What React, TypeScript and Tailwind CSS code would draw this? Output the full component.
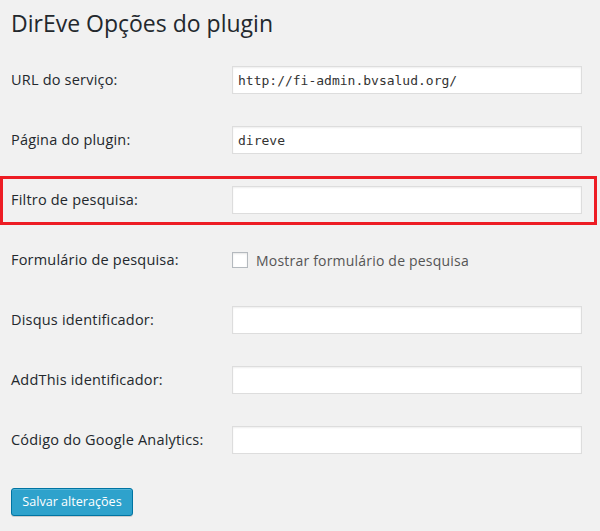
import React from 'react';

const FIELDS = [
    { label: 'URL do serviço:', value: 'http://fi-admin.bvsalud.org/' },
    { label: 'Página do plugin:', value: 'direve' },
    { label: 'Filtro de pesquisa:', value: '', highlight: true },
    { label: 'Formulário de pesquisa:', checkbox: 'Mostrar formulário de pesquisa' },
    { label: 'Disqus identificador:', value: '' },
    { label: 'AddThis identificador:', value: '' },
    { label: 'Código do Google Analytics:', value: '' },
];

function Row({ field }: { field: (typeof FIELDS)[number] }) {
    return (
        <div className="relative flex h-[60px] items-center">
            {field.highlight && (
                <div className="pointer-events-none absolute left-[-11px] right-[-4px] top-[6px] bottom-[5px] border-[3px] border-[#ed1c24]" />
            )}
            <label className="w-[221px] text-[14.5px] font-medium tracking-[0.2px] text-[#23282d]">{field.label}</label>
            {field.checkbox ? (
                <label className="flex items-center gap-[8px] text-[14px] tracking-[0.2px] text-[#555]">
                    <span className="block h-[16px] w-[16px] border border-[#b4b9be] bg-white shadow-[inset_0_1px_2px_rgba(0,0,0,0.1)]" />
                    {field.checkbox}
                </label>
            ) : (
                <input
                    type="text"
                    defaultValue={field.value}
                    className="h-[28px] w-[350px] border border-[#ddd] bg-white px-[5px] text-[13px] text-[#333] shadow-[inset_0_1px_2px_rgba(0,0,0,0.07)] outline-none"
                    style={{ fontFamily: '"DejaVu Sans Mono", monospace' }}
                />
            )}
        </div>
    );
}

export default function App() {
    return (
        <div className="min-h-[531px] w-[600px] bg-[#f1f1f1] pl-[11px]" style={{ fontFamily: '"Open Sans", sans-serif' }}>
            <h2 className="h-[50px] pt-[9px] text-[23px] leading-[29px] font-normal text-[#23282d]">DirEve Opções do plugin</h2>
            <div className="w-[582px]">
                {FIELDS.map((f) => (
                    <Row key={f.label} field={f} />
                ))}
            </div>
            <button className="mt-[18px] h-[28px] w-[122px] rounded-[3px] border border-[#0074a2] bg-[#2ea2cc] text-[12.6px] text-white shadow-[inset_0_1px_0_rgba(120,200,230,0.5),0_1px_0_rgba(0,0,0,0.15)]">
                Salvar alterações
            </button>
        </div>
    );
}
